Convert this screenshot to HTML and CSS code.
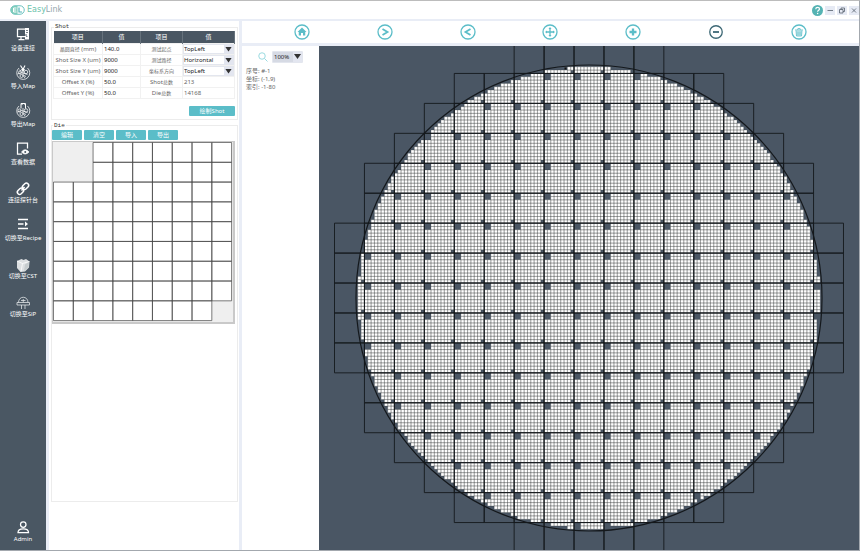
FILE: index.html
```html
<!DOCTYPE html>
<html lang="zh-CN">
<head>
<meta charset="utf-8">
<title>EasyLink</title>
<link rel="stylesheet" href="styles.css">
</head>
<body>
<header class="titlebar">
  <div class="brand">
    <svg class="brand-mark" viewBox="0 0 30 20" aria-hidden="true">
      <rect x="1.500" y="1.500" width="27" height="17" rx="8.500" fill="#fff" stroke="#6cc3c0" stroke-width="2"/>
      <path d="M15 1.500H10a8.500 8.500 0 0 0 0 17h5z" fill="#7ccbbb"/>
      <path d="M13 6H7v8h6M7 10h5.500" fill="none" stroke="#fff" stroke-width="2"/>
      <path d="M18 5v9h6" fill="none" stroke="#4fb3b8" stroke-width="2.400"/>
    </svg>
    <span class="brand-name"><span class="brand-easy">Easy</span>Link</span>
  </div>
  <div class="window-buttons">
    <button class="help" aria-label="帮助"><svg viewBox="0 0 22 22"><circle cx="11" cy="11" r="11" fill="#55b3b3"/><path d="M7.500 8.500c0-5 7.500-4.500 7.500-.5 0 2.500-3.800 2.500-3.800 5.500" fill="none" stroke="#fff" stroke-width="2.400"/><circle cx="11.200" cy="16.800" r="1.500" fill="#fff"/></svg></button>
    <button class="win" aria-label="最小化"><svg viewBox="0 0 18 18"><path d="M4 9h11"/></svg></button>
    <button class="win" aria-label="还原"><svg viewBox="0 0 18 18"><path d="M4 7h7v7H4zM7 7V4h7v7h-3"/></svg></button>
    <button class="win" aria-label="关闭"><svg viewBox="0 0 18 18"><path d="M5 5l8 8M13 5l-8 8"/></svg></button>
  </div>
</header>

<div class="workspace">
  <nav class="sidebar">
    <button class="nav-item">
      <svg viewBox="0 0 32 32"><path d="M5 6h18v15H5z" fill="none" stroke="#fff" stroke-width="2.500"/><path d="M12 21v5M7 27h12" stroke="#fff" stroke-width="2.500"/><path d="M20 4h8v23h-8z" fill="#fff"/><path d="M22 9h4M22 13h4M22 21h3" stroke="#4a5763" stroke-width="1.500"/><path d="M17 18h7" stroke="#4a5763" stroke-width="2"/></svg>
      <span>设备连接</span>
    </button>
    <button class="nav-item">
      <svg viewBox="0 0 32 32" fill="none" stroke="#fff" stroke-width="1.500"><path d="M8 8A13 13 0 1 0 25 8"/><path d="M11 3l5 8 4-8M13 10l3 4 3-4" stroke-width="2.200"/><circle cx="10" cy="17" r="3"/><circle cx="22" cy="16" r="3.500"/><circle cx="13" cy="24" r="3"/><path d="M16 14v8l6 3M5 20l8-3 12 4M20 28l-4-5M9 12l4 2"/></svg>
      <span>导入Map</span>
    </button>
    <button class="nav-item">
      <svg viewBox="0 0 32 32" fill="none" stroke="#fff" stroke-width="1.500"><path d="M8 8A13 13 0 1 0 25 8"/><path d="M12 13V3h9v10M13 6l4-4 4 4" stroke-width="2"/><circle cx="9" cy="17" r="3"/><circle cx="22" cy="17" r="3.500"/><circle cx="13" cy="24" r="3"/><path d="M16 12v10l6 3M5 20l8-3 12 4M20 28l-4-5"/></svg>
      <span>导出Map</span>
    </button>
    <button class="nav-item">
      <svg viewBox="0 -1 32 32" fill="none" stroke="#fff" stroke-width="2.500"><path d="M14 27H5V5h20v11"/><path d="M13 23q7-9 15 0-8 8-15 0z" fill="#fff" stroke-width="1.500"/><circle cx="20.500" cy="23" r="2" fill="#4a5763" stroke="none"/></svg>
      <span>查看数据</span>
    </button>
    <button class="nav-item">
      <svg viewBox="0 -5 32 32" fill="none" stroke="#fff" stroke-width="3"><rect x="14" y="7" width="14" height="9" rx="4.500" transform="rotate(-45 21 11.500)"/><rect x="4" y="17" width="14" height="9" rx="4.500" transform="rotate(-45 11 21.500)"/><path d="M13 20l6-7"/></svg>
      <span>连接探针台</span>
    </button>
    <button class="nav-item">
      <svg viewBox="0 -2 32 32" fill="none" stroke="#fff" stroke-width="2.800"><path d="M6 5h20M6 14h11M6 23h20"/><path d="M20 9v10l6-5z" fill="#fff" stroke="none"/></svg>
      <span>切换至Recipe</span>
    </button>
    <button class="nav-item">
      <svg viewBox="0 -6 32 32"><path d="M4 8l9-4 4 2 5-2 7 5-1 12-8 8-9 1-7-8z" fill="#dcdfe1"/><path d="M4 8l11 5 14-4M15 13l-3 16" fill="none" stroke="#fff" stroke-width="1.500"/><path d="M28 10l-8 5-2 13 9-7z" fill="#c5cbcd"/></svg>
      <span>切换至CST</span>
    </button>
    <button class="nav-item">
      <svg viewBox="0 -6 32 32" fill="none" stroke="#dfe3e6" stroke-width="1.600"><path d="M7 15C7 1 26 1 26 15M4 15h25v5H4zM13 20v8M20 20v8M16.500 8v7M12 11h9"/></svg>
      <span>切换至SiP</span>
    </button>
    <button class="nav-item nav-user">
      <svg viewBox="0 -5 32 32" fill="none" stroke="#fff" stroke-width="2.500"><circle cx="16.500" cy="10" r="5.500"/><path d="M6 26c0-10 21-10 21 0z"/></svg>
      <span>Admin</span>
    </button>
  </nav>

  <aside class="settings">
    <fieldset class="group">
      <legend>Shot</legend>
      <table class="params">
        <colgroup><col class="c-name"><col class="c-value"><col class="c-name2"><col class="c-choice"></colgroup>
        <thead><tr><th>项目</th><th>值</th><th>项目</th><th>值</th></tr></thead>
        <tbody>
          <tr><td><label for="dia"><span class="cn">晶圆直径</span> (mm)</label></td><td><input id="dia" value="140.0"></td><td><label class="cn" for="start">测试起点</label></td><td><div class="pick"><select id="start"><option>TopLeft</option></select></div></td></tr>
          <tr><td><label for="sx">Shot Size X (um)</label></td><td><input id="sx" value="9000"></td><td><label class="cn" for="route">测试路径</label></td><td><div class="pick"><select id="route"><option>Horizontal</option></select></div></td></tr>
          <tr><td><label for="sy">Shot Size Y (um)</label></td><td><input id="sy" value="9000"></td><td><label class="cn" for="axis">坐标系方向</label></td><td><div class="pick"><select id="axis"><option>TopLeft</option></select></div></td></tr>
          <tr><td><label for="ox">Offset X (%)</label></td><td><input id="ox" value="50.0"></td><td>Shot<span class="cn">总数</span></td><td class="total">213</td></tr>
          <tr><td><label for="oy">Offset Y (%)</label></td><td><input id="oy" value="50.0"></td><td>Die<span class="cn">总数</span></td><td class="total">14168</td></tr>
        </tbody>
      </table>
      <div class="draw-row"><button class="action action-wide">绘制Shot</button></div>
    </fieldset>
    <fieldset class="group group-die">
      <legend>Die</legend>
      <div class="die-actions">
        <button class="action">编辑</button><button class="action">清空</button><button class="action">导入</button><button class="action">导出</button>
      </div>
      <div class="die-frame">
        <svg class="die-map" viewBox="0 0 181 181" role="img" aria-label="Die"></svg>
      </div>
    </fieldset>
  </aside>

  <main class="stage">
    <div class="toolbar">
      <button aria-label="主页"><svg viewBox="0 0 32 32"><circle cx="16" cy="16" r="14"/><path class="solid" d="M16 7l9 9h-2.500v7h-4.500v-5h-4v5H9.500v-7H7z"/></svg></button>
      <button aria-label="下一个"><svg viewBox="0 0 32 32"><circle cx="16" cy="16" r="14"/><path class="bold" d="M11 10l10 6-10 6"/></svg></button>
      <button aria-label="上一个"><svg viewBox="0 0 32 32"><circle cx="16" cy="16" r="14"/><path class="bold" d="M21 10l-10 6 10 6"/></svg></button>
      <button aria-label="居中"><svg viewBox="0 0 32 32"><circle cx="16" cy="16" r="14"/><path d="M16 8v16M8 16h16"/><path class="solid" d="M16 6l3 4h-6zM16 26l3-4h-6zM6 16l4-3v6zM26 16l-4-3v6z"/></svg></button>
      <button aria-label="放大"><svg viewBox="0 0 32 32"><circle cx="16" cy="16" r="14"/><path class="heavy" d="M16 9v14M9 16h14"/></svg></button>
      <button class="dark" aria-label="缩小"><svg viewBox="0 0 32 32"><circle cx="16" cy="16" r="12.500"/><path class="bold" d="M10 16h12"/></svg></button>
      <button aria-label="删除"><svg viewBox="0 0 32 32"><circle cx="16" cy="16" r="14"/><path class="bin" d="M8 12h16M12 11q4-5 8 0M10 13l1 11h10l1-11M14 15v7M18 15v7"/></svg></button>
    </div>
    <div class="board">
      <section class="info">
        <div class="zoom">
          <svg class="lens" viewBox="0 0 20 20" aria-hidden="true"><circle cx="8" cy="8" r="6.500"/><path d="M13 13l6 6"/></svg>
          <div class="pick pick-zoom"><select aria-label="缩放"><option>100%</option></select></div>
        </div>
        <p>序号: #-1</p>
        <p>坐标: (-1,9)</p>
        <p>索引: -1-80</p>
      </section>
      <div class="viewer">
        <svg class="wafer" viewBox="-270.5 -252 541 504" preserveAspectRatio="xMidYMid slice" role="img" aria-label="Wafer"></svg>
      </div>
    </div>
  </main>
</div>
<script src="wafer.js"></script>
</body>
</html>
```
FILE: styles.css
```css
* { box-sizing: border-box; }

body {
  margin: 0;
  height: 100vh;
  display: flex;
  flex-direction: column;
  border: 1px solid #a3a8ae;
  border-top-color: #bcbcbc;
  border-left: 0;
  background: #e9edf6;
  color: #666;
  font: 6px/8px "Noto Sans", "Noto Sans CJK SC", sans-serif;
}

button, input, select { font: inherit; color: inherit; border: 0; padding: 0; margin: 0; background: none; }
svg { display: block; }

.titlebar {
  display: flex;
  justify-content: space-between;
  align-items: center;
  height: 18px;
  padding: 0 0 0 10px;
  background: #fff;
}
.brand { display: flex; align-items: center; gap: 2px; }
.brand-mark { width: 15px; height: 10px; }
.brand-name { font: 8px/10px "DejaVu Sans", sans-serif; color: #93a6ad; }
.brand-easy { color: #6cc2ab; }
.window-buttons { display: flex; align-items: center; gap: 2px; }
.help svg { width: 11px; height: 11px; }
.win { background: #e6eaf4; }
.win svg { width: 10px; height: 9px; fill: none; stroke: #56606c; stroke-width: 1.6; }

.workspace { flex: 1; min-height: 0; display: flex; gap: 3px; padding-top: 2px; }

.sidebar { width: 46px; display: flex; flex-direction: column; background: #4a5763; color: #fff; }
.nav-item {
  height: 38px;
  padding-top: 5px;
  display: flex;
  flex-direction: column;
  align-items: center;
  gap: 1px;
  line-height: 10px;
  white-space: nowrap;
}
.nav-item svg { width: 16px; height: 16px; overflow: visible; }
.nav-user { margin-top: auto; }

.settings { width: 190px; padding: 2px 1px 0 2px; background: #fff; }
.group { margin: 0; padding: 0 2px 0 1px; border: 1px solid #ececec; min-width: 0; }
.group legend { margin-left: 1px; padding: 0 1px; font: 6px/8px "Liberation Mono", monospace; color: #333; }
.params { width: 100%; table-layout: fixed; border-collapse: collapse; text-align: center; }
.c-name { width: 49px; }
.c-value { width: 38px; }
.c-name2 { width: 42px; }
.params th { height: 12px; padding: 0; background: #4a5763; border-right: 1px solid #66727c; color: #fff; font-weight: 400; }
.params td { height: 11px; padding: 0; border: 1px solid #f1f1f1; white-space: nowrap; }
.params input { display: block; width: 100%; height: 8px; padding-left: 1px; color: #222; }
.params .total { text-align: left; padding-left: 1px; }
.cn { font-size: 5px; }

.pick { position: relative; display: flex; color: #222; border: 1px solid #e3e6ee; }
.pick select { appearance: none; flex: 1; min-width: 0; height: 8px; line-height: 8px; }
.pick::before { content: ""; position: absolute; inset: 0 0 0 auto; width: 9px; background: #e3e6f0; }
.pick::after { content: ""; position: absolute; right: 1px; top: 2px; width: 7px; height: 5px; background: #333; clip-path: polygon(0 0, 100% 0, 50% 100%); pointer-events: none; }

.draw-row { display: flex; justify-content: flex-end; padding: 7px 0 3px; }
.action { width: 30px; height: 10px; border-radius: 1px; background: #5bbdc8; color: #fff; line-height: 10px; }
.action-wide { width: 46px; }

.group-die { height: 380px; margin-top: 2px; padding: 0 2px 0 0; }
.die-actions { display: flex; gap: 2px; }
.die-frame { margin-top: 1px; border: 1px solid #c9c9c9; border-right-width: 2px; border-bottom-width: 2px; background: #efefef; }
.die-map { width: 100%; }
.die-map path { fill: #fff; stroke: #444; stroke-width: 0.7; }

.stage { flex: 1; min-width: 0; display: flex; flex-direction: column; gap: 3px; }
.toolbar { display: grid; grid-template-columns: repeat(7, 1fr); height: 22px; padding: 0 19px; background: #fff; }
.toolbar button { display: grid; place-items: center; color: #5bbdc8; }
.toolbar .dark { color: #3d6875; }
.toolbar svg { width: 16px; height: 16px; fill: none; stroke: currentColor; stroke-width: 2.6; }
.toolbar .solid { fill: currentColor; stroke: none; }
.toolbar .bold { stroke-width: 3.6; }
.toolbar .heavy { stroke-width: 4.6; }
.toolbar .bin { stroke-width: 1.6; fill: #bfe6ea; }

.board { flex: 1; min-height: 0; display: flex; }
.info { width: 77px; padding: 5px 4px; background: #fff; }
.info p { margin: 0; }
.zoom { display: flex; align-items: center; gap: 4px; margin: 0 12px 4px; }
.lens { width: 10px; height: 10px; fill: none; stroke: #8fd6dc; stroke-width: 1.8; flex: none; }
.pick-zoom { width: 31px; flex: none; background: #d6dae4; border-radius: 1px; }
.pick-zoom select { height: 10px; padding-left: 1px; }

.viewer { flex: 1; min-width: 0; background: #4a5664; }
.wafer { width: 100%; height: 100%; }
.wafer .dies { fill: #fff; stroke: #2a2c2e; stroke-width: 0.25; }
.wafer .shots { fill: none; stroke: #14181c; stroke-width: 0.9; }
.wafer .edge { fill: none; stroke: #14181c; stroke-width: 1.2; }
.wafer .current { fill: #111; }
```
FILE: wafer.js
```js
const NS = "http://www.w3.org/2000/svg";

function add(svg, name, attrs) {
  const node = document.createElementNS(NS, name);
  for (const key in attrs) node.setAttribute(key, attrs[key]);
  svg.appendChild(node);
}

// A shot holds 9 x 9 dies; its top-left 2 x 2 block and last die are unused.
const DIES = 9;
const unused = (c, r) => (c < 2 && r < 2) || (c === 8 && r === 8);
const box = (x, y, s) => `M${x.toFixed(2)} ${y.toFixed(2)}h${s}v${s}h${-s}z`;

let template = "";
for (let r = 0; r < DIES; r++)
  for (let c = 0; c < DIES; c++)
    if (!unused(c, r)) template += box(0.5 + c * 19.9, 0.5 + r * 19.9, 19.9);
add(document.querySelector(".die-map"), "path", { d: template });

// Wafer: 140 mm across, shots of 9 mm.
const radius = 233;
const shot = 29.94;
const die = shot / DIES;
const perRow = [5, 9, 11, 13, 15, 15, 17, 17, 17, 17, 17, 15, 15, 13, 11, 9, 5];
let shots = "";
let dies = "";
perRow.forEach((count, row) => {
  const top = (row - 8.5) * shot;
  for (let i = 0; i < count; i++) {
    const left = (i - count / 2) * shot;
    shots += box(left, top, shot);
    for (let r = 0; r < DIES; r++)
      for (let c = 0; c < DIES; c++) {
        const x = left + c * die;
        const y = top + r * die;
        const far = Math.hypot(Math.max(Math.abs(x), Math.abs(x + die)), Math.max(Math.abs(y), Math.abs(y + die)));
        if (!unused(c, r) && far < radius - 0.5) dies += box(x, y, die.toFixed(3));
      }
  }
});
const wafer = document.querySelector(".wafer");
add(wafer, "path", { class: "dies", d: dies });
add(wafer, "path", { class: "shots", d: shots });
add(wafer, "circle", { class: "edge", r: radius });
add(wafer, "rect", { class: "current", x: -24.5, y: -230.5, width: 2, height: 2 });
```
